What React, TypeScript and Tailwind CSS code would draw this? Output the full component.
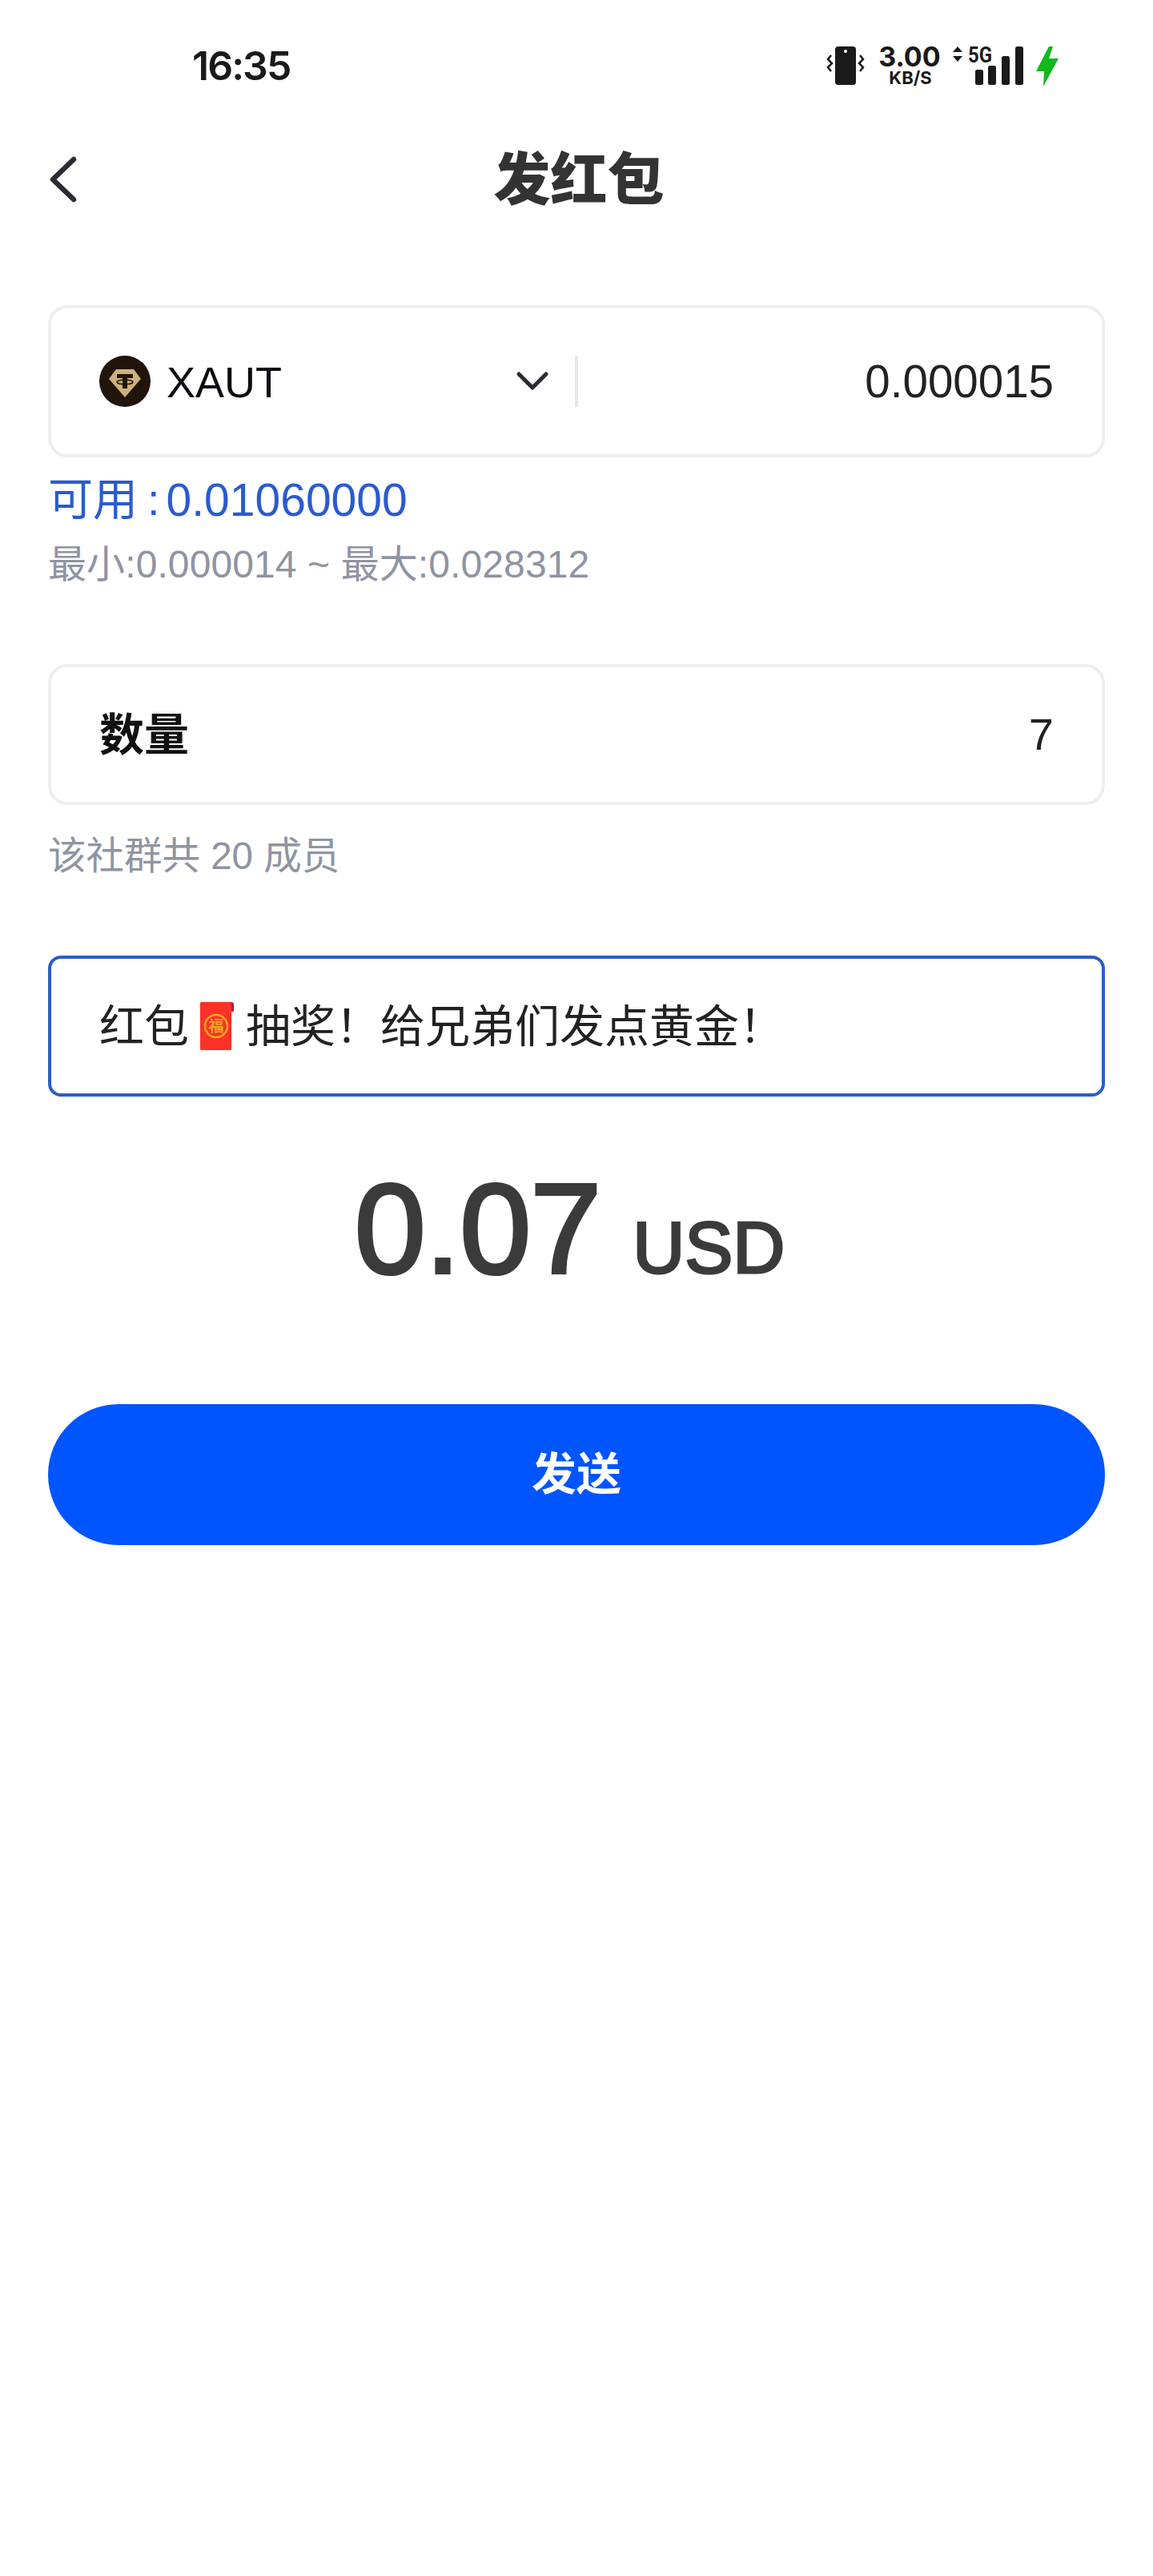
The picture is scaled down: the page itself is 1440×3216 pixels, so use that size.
const cjk = "font-['Liberation_Sans','Noto_Sans_CJK_SC',sans-serif]";

const StatusBar = () => (
  <div className="flex h-[164px] items-center justify-between pl-[240px] pr-[114px]">
    <span className="font-['Inter',sans-serif] text-[50px] leading-none font-semibold tracking-[-2px] text-[#1a1a1a]">16:35</span>
    {/* viewBox keeps the reference's page coordinates */}
    <svg width="296" height="64" viewBox="1030 50 296 64" fill="none">
      <path d="M1038 69l-4 5 5 5-5 5 4 5" stroke="#1a1a1a" strokeWidth="2.5" />
      <rect x="1043" y="58" width="26" height="48" rx="4" fill="#1a1a1a" />
      <circle cx="1056" cy="64" r="2" fill="#fff" />
      <path d="M1074 69l4 5-5 5 5 5-4 5" stroke="#1a1a1a" strokeWidth="2.5" />
      <text x="1136" y="83" textAnchor="middle" fontFamily="Inter" fontWeight="700" fontSize="34" fill="#1a1a1a">3.00</text>
      <text x="1137" y="105" textAnchor="middle" fontFamily="Inter" fontWeight="700" fontSize="22" fill="#1a1a1a">KB/S</text>
      <path d="M1196 58l6 7h-12zM1196 77l6-7h-12z" fill="#1a1a1a" />
      <text x="1209" y="78" fontFamily="Roboto" fontWeight="700" fontSize="27" textLength="30" lengthAdjust="spacingAndGlyphs" fill="#1a1a1a">5G</text>
      <rect x="1218" y="87" width="10" height="19" rx="2.5" fill="#1a1a1a" />
      <rect x="1234" y="82" width="10" height="24" rx="2.5" fill="#1a1a1a" />
      <rect x="1251" y="70" width="10" height="36" rx="2.5" fill="#1a1a1a" />
      <rect x="1268" y="58" width="10" height="48" rx="2.5" fill="#1a1a1a" />
      <path d="M1310 58l-16 31h10l-1 19 19-35h-12l5-15z" fill="#11b81c" />
    </svg>
  </div>
);

const Coin = () => (
  <svg width="64" height="64" viewBox="0 0 64 64">
    <circle cx="32" cy="32" r="32" fill="#21140a" />
    <path d="M21 17h22l9 12-20 23-20-23z" fill="#cdb07c" />
    <path d="M22 23h20v5h-7v13h-6V28h-7z" fill="#21140a" />
    <ellipse cx="32" cy="33" rx="10" ry="2.800" fill="none" stroke="#21140a" strokeWidth="1.500" />
  </svg>
);

const RedPacket = () => (
  <svg width="42" height="62" viewBox="0 0 42 62" className="ml-[14px] mr-[15px] shrink-0">
    <path d="M36 1h3c2 0 3 1 3 3v8c0 1-1 1-3 1h-3z" fill="#b81d36" />
    <rect x="0" y="1" width="39" height="60" rx="1.500" fill="#fb3226" />
    <circle cx="20" cy="31" r="14" fill="none" stroke="#f8a823" strokeWidth="2.500" />
    <text x="20" y="38" textAnchor="middle" fontSize="19" fontWeight="700" fontFamily="Noto Sans CJK SC" fill="#f8a823">福</text>
  </svg>
);

export default function App() {
  return (
    <div className={`min-h-[3216px] w-[1440px] bg-white ${cjk}`}>
      <StatusBar />

      <div className="mt-[11px] flex h-[96px] items-center justify-between px-[60px]">
        <svg width="40" height="66" viewBox="60 190 40 66" fill="none">
          <path d="M92 199L66 224l26 25" stroke="#2a2c33" strokeWidth="6.500" strokeLinecap="round" strokeLinejoin="round" />
        </svg>
        <h1 className="pt-[2px] pl-[6px] text-[71px] leading-none font-black text-[#333333]">发红包</h1>
        <div className="w-[40px]" />
      </div>

      <div className="px-[60px] pt-[110px]">
        <div className="flex h-[190px] items-center rounded-[24px] border-[4px] border-[#eeeeee] px-[60px]">
          <div className="flex w-[594px] items-center">
            <Coin />
            <span className="ml-[20px] mt-[2px] text-[54px] leading-none text-[#0c0c14]">XAUT</span>
            <svg className="ml-auto mr-[32px]" width="42" height="30" viewBox="0 0 42 30" fill="none">
              <path d="M4 6l17 17L38 6" stroke="#2a2c33" strokeWidth="5" strokeLinecap="round" strokeLinejoin="round" />
            </svg>
          </div>
          <div className="h-[64px] w-[4px] bg-[#e8e8e8]" />
          <span className="ml-auto mt-[2px] text-[56.500px] leading-none text-[#222222]">0.000015</span>
        </div>

        <p className="mt-[18px] flex text-[56px] leading-[70px] text-[#2a5bcf]">
          <span>可用</span>
          <span className="ml-[12px]">:</span>
          <span className="ml-[8px] text-[57px]">0.01060000</span>
        </p>
        <p className="mt-[16px] text-[48px] leading-[60px] tracking-[0.1px] text-[#8f94a3]">最小:0.000014 ~ 最大:0.028312</p>

        <div className="mt-[94px] flex h-[176px] items-center justify-between rounded-[24px] border-[4px] border-[#eeeeee] px-[60px]">
          <span className="mt-[2px] text-[56px] leading-none font-bold text-[#111111]">数量</span>
          <span className="text-[56px] leading-none text-[#222222]">7</span>
        </div>
        <p className="mt-[34px] text-[47.500px] leading-[60px] text-[#8f94a3]">该社群共 20 成员</p>

        <div className="mt-[94px] flex h-[176px] items-center rounded-[16px] border-[4px] border-[#2b5cc8] px-[60px] text-[56px] leading-none text-[#222222]">
          <span className="mt-[2px]">红包</span>
          <RedPacket />
          <span className="mt-[2px]">抽奖！给兄弟们发点黄金！</span>
        </div>

        <div className="mt-[75px] flex items-baseline justify-center gap-[40px] pr-[17px] font-['Liberation_Sans',sans-serif] text-[#3b3b3b] [-webkit-text-stroke:4px_#3b3b3b]">
          <span className="text-[160px] leading-[180px] tracking-[-1px]">0.07</span>
          <span className="text-[90px] leading-none [-webkit-text-stroke:3px_#3b3b3b]">USD</span>
        </div>

        <button className="mt-[129px] flex h-[176px] w-full items-center justify-center rounded-full bg-[#0055ff] text-[56px] font-bold text-white">
          发送
        </button>
      </div>
    </div>
  );
}
